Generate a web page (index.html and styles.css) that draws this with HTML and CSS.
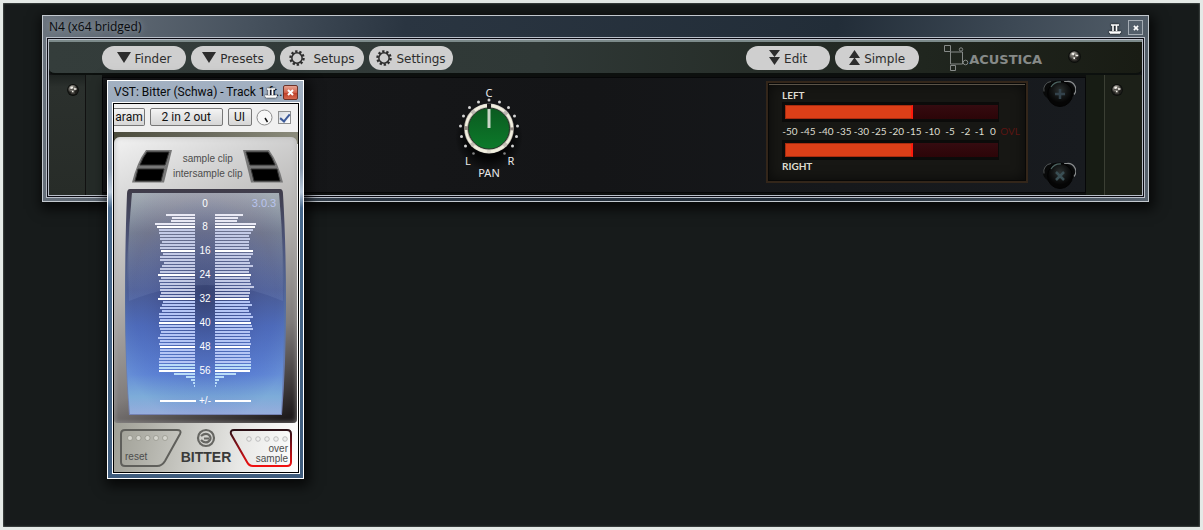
FILE: index.html
```html
<!DOCTYPE html>
<html lang="en">
<head>
<meta charset="utf-8">
<title>N4 (x64 bridged)</title>
<link rel="stylesheet" href="styles.css">
</head>
<body>

<svg class="defs" width="0" height="0" aria-hidden="true">
  <defs>
    <radialGradient id="stud" cx="40%" cy="30%"><stop offset="0" stop-color="#fff"/><stop offset=".35" stop-color="#99968f"/><stop offset="1" stop-color="#201f1c"/></radialGradient>
    <radialGradient id="bolt" cx="50%" cy="35%"><stop offset="0" stop-color="#2c3232"/><stop offset=".6" stop-color="#121414"/><stop offset="1" stop-color="#050505"/></radialGradient>
  </defs>
  <symbol id="rivet" viewBox="0 0 12 12">
    <circle cx="6" cy="6" r="5.900" fill="#0c0e0c"/>
    <circle cx="6" cy="6" r="4.900" fill="url(#stud)"/>
    <path d="M3 5.500h6M6 3v6M4 9h4" stroke="#55524c" fill="none"/>
    <path d="M3.500 3.500h2.500M7 5h2.500M5 7.500h1.500" stroke="#f2efe8" stroke-width="1.400" fill="none"/>
  </symbol>
  <symbol id="pin" viewBox="0 0 12 10">
    <path d="M2 1h8M4 1v6M7.500 1v6M0 8h12M1 9h10" stroke="#fff" stroke-width="1.600" fill="none"/>
  </symbol>
  <symbol id="gear" viewBox="0 0 18 18">
    <circle cx="9" cy="9" r="7.400" fill="none" stroke="#2d2d2d" stroke-width="2.600" stroke-dasharray="2.650 2"/>
    <circle cx="9" cy="9" r="5.800" fill="none" stroke="#2d2d2d" stroke-width="1.700"/>
  </symbol>
  <symbol id="screw" viewBox="0 0 34 30">
    <ellipse cx="17" cy="12" rx="16" ry="10.500" fill="#080909"/>
    <path d="M22 2.500h3a8 8 0 0 1 7 13" fill="none" stroke="#8b8e8f" stroke-width="1.200"/>
    <path d="M9 2.500a8 8 0 0 0-7 10" fill="none" stroke="#4e5253"/>
    <circle cx="18" cy="15" r="12.500" fill="url(#bolt)" stroke="#030303"/>
    <path d="M9 8a11 11 0 0 1 10-5" fill="none" stroke="#4d6462" stroke-width="1.200"/>
  </symbol>
</svg>

<main class="desktop">

  <section class="window host">
    <header class="titlebar">
      <h1>N4 (x64 bridged)</h1>
      <button class="pin" aria-label="Pin"><svg width="12" height="10"><use href="#pin"/></svg></button>
      <button class="close" aria-label="Close"><svg width="6" height="6" viewBox="0 0 7 7"><path d="M1 1l5 5M6 1L1 6" stroke="#fff" stroke-width="1.800"/></svg></button>
    </header>
    <div class="client">
      <div class="n4">
        <nav class="toolbar">
          <button class="pill"><svg width="14" height="11"><path d="M0 0h14L7 11z"/></svg>Finder</button>
          <button class="pill"><svg width="14" height="11"><path d="M0 0h14L7 11z"/></svg>Presets</button>
          <button class="pill wide"><svg width="16" height="16"><use href="#gear"/></svg>Setups</button>
          <button class="pill"><svg width="16" height="16"><use href="#gear"/></svg>Settings</button>
          <span class="fill"></span>
          <button class="pill"><svg width="11" height="15"><path d="M0 0h11L5.500 7zM0 7h11l-5.500 8z"/></svg>Edit</button>
          <button class="pill"><svg width="11" height="15"><path d="M5.500 0L11 8H0zM5.500 7.500L11 15H0z"/></svg>Simple</button>
          <div class="brand">
            <svg width="25" height="26" viewBox="0 0 25 26" fill="none" stroke="#868a88"><path d="M.5.500h6v6h-6zM6 7h12.500v12H6.500V7M6.500 20.500h5v5h-5z"/><circle cx="17" cy="4.500" r="1.700"/><circle cx="21.500" cy="17.500" r="2.300"/></svg>
            <span>ACUSTICA</span>
          </div>
          <svg class="rivet" width="13" height="13"><use href="#rivet"/></svg>
        </nav>
        <div class="rack">
          <div class="ear left"><svg width="12" height="12"><use href="#rivet"/></svg></div>
          <div class="rail"></div>
          <div class="panel">
            <svg class="pan" width="70" height="104" viewBox="0 0 70 104" role="img" aria-label="Pan">
              <defs>
                <linearGradient id="ring" x1="0" y1="0" x2="0" y2="1"><stop offset="0" stop-color="#d8d4cf"/><stop offset=".5" stop-color="#8f8780"/><stop offset="1" stop-color="#e4e1d4"/></linearGradient>
                <linearGradient id="cap" x1="0" y1="0" x2="0" y2="1"><stop offset="0" stop-color="#0b5a20"/><stop offset="1" stop-color="#0c7a2a"/></linearGradient>
                <radialGradient id="drop"><stop offset=".6" stop-color="#000" stop-opacity=".8"/><stop offset="1" stop-color="#000" stop-opacity="0"/></radialGradient>
              </defs>
              <circle cx="35" cy="52" r="34" fill="url(#drop)"/>
              <g fill="#d2d2d2">
                <circle cx="35" cy="15" r="1.500"/><circle cx="24.500" cy="17" r="1.500"/><circle cx="45.500" cy="17" r="1.500"/>
                <circle cx="15.500" cy="22.500" r="1.500"/><circle cx="54.500" cy="22.500" r="1.500"/><circle cx="9.500" cy="31" r="1.500"/><circle cx="60.500" cy="31" r="1.500"/>
                <circle cx="6.500" cy="41" r="1.500"/><circle cx="63.500" cy="41" r="1.500"/><circle cx="7.500" cy="51.500" r="1.500"/><circle cx="62.500" cy="51.500" r="1.500"/>
                <circle cx="11.500" cy="61" r="1.500"/><circle cx="58.500" cy="61" r="1.500"/><circle cx="19.500" cy="68.500" r="1.300" opacity=".6"/><circle cx="50.500" cy="68.500" r="1.300" opacity=".6"/>
              </g>
              <circle cx="35" cy="43.500" r="25" fill="url(#ring)"/>
              <circle cx="35" cy="43.500" r="23" fill="none" stroke="#f1efdf" stroke-width="2.500" stroke-dasharray="14 4.060" stroke-dashoffset="-2"/>
              <circle cx="35" cy="43.500" r="20.500" fill="url(#cap)" stroke="#243527"/>
              <path d="M35 18.500v5" stroke="#1a1a1a" stroke-width="4"/>
              <path d="M35 24v19" stroke="#c9d5c7" stroke-width="3"/>
              <text x="35" y="12">C</text><text x="14" y="80">L</text><text x="57" y="80">R</text><text x="35" y="92">PAN</text>
            </svg>
            <div class="levels">
              <span>LEFT</span>
              <div class="bar"><i></i></div>
              <ol class="scale">
                <li>-50</li><li>-45</li><li>-40</li><li>-35</li><li>-30</li><li>-25</li><li>-20</li><li>-15</li><li>-10</li><li>-5</li><li>-2</li><li>-1</li><li>0</li><li class="ovl">OVL</li>
              </ol>
              <div class="bar"><i></i></div>
              <span>RIGHT</span>
            </div>
            <div class="screws">
              <svg width="34" height="30"><use href="#screw"/><path d="M18 10v10M13 15h10" stroke="#33424b" stroke-width="2.500"/></svg>
              <svg width="34" height="30"><use href="#screw"/><path d="M14 11l8 8M22 11l-8 8" stroke="#3a4f54" stroke-width="2.500"/></svg>
            </div>
          </div>
          <div class="rail"></div>
          <div class="ear right"><svg width="12" height="12"><use href="#rivet"/></svg></div>
        </div>
      </div>
    </div>
  </section>

  <section class="window vst">
    <header class="titlebar">
      <h1>VST: Bitter (Schwa) - Track 1 fr..</h1>
      <button class="pin" aria-label="Pin"><svg width="12" height="10"><use href="#pin"/></svg></button>
      <button class="close" aria-label="Close"><svg width="7" height="7" viewBox="0 0 7 7"><path d="M1 1l5 5M6 1L1 6" stroke="#fff" stroke-width="2"/></svg></button>
    </header>
    <div class="client">
      <div class="controls">
        <button class="param">aram</button>
        <button class="io">2 in 2 out</button>
        <button class="ui">UI</button>
        <svg width="17" height="17" viewBox="0 0 17 17"><circle cx="8.500" cy="8.500" r="7.500" fill="#f8f8f8" stroke="#8d8d8d"/><path d="M9 9l2.500 4" stroke="#111" stroke-width="1.500"/></svg>
        <input type="checkbox" aria-label="Enable plug-in" checked>
      </div>
      <div class="bitter">
        <div class="bezel">
          <div class="clips">
            <svg width="42" height="33" viewBox="0 0 42 33"><path d="M15 0h26L33 32.500H1Q6 12 15 0z" fill="#777"/><path d="M16 2h22l-4 13H9Q12 7 16 2zM7 19h26l-3 12H4z" stroke="#333"/></svg>
            <p>sample clip<br>intersample clip</p>
            <svg width="42" height="33" viewBox="0 0 42 33"><path d="M1 0h26Q36 12 41 32.500H9z" fill="#777"/><path d="M4 2h22q4 5 7 13H8zM9 19h26l3 12H12z" stroke="#333"/></svg>
          </div>
          <svg class="screen" width="163" height="228" viewBox="0 0 163 228" role="img" aria-label="Bit meter">
            <defs>
              <linearGradient id="rim" x1="0" y1="0" x2="0" y2="1"><stop offset="0" stop-color="#3f3c49"/><stop offset=".25" stop-color="#4c557c"/><stop offset=".6" stop-color="#5572ab"/><stop offset="1" stop-color="#7583b4"/></linearGradient>
              <linearGradient id="glass" x1="0" y1="0" x2="0" y2="1"><stop offset="0" stop-color="#a3a2a6"/><stop offset=".18" stop-color="#6a6b7a"/><stop offset=".44" stop-color="#48568a"/><stop offset=".6" stop-color="#4c68b6"/><stop offset=".82" stop-color="#5b80d3"/><stop offset=".92" stop-color="#78a6d6"/><stop offset="1" stop-color="#98a7da"/></linearGradient>
              <radialGradient id="glow" cx="50%" cy="46%" r="60%"><stop offset="0" stop-color="#2c3660" stop-opacity=".65"/><stop offset=".5" stop-color="#41539b" stop-opacity=".3"/><stop offset=".75" stop-color="#5577cf" stop-opacity=".12"/><stop offset="1" stop-color="#8fc4e4" stop-opacity=".2"/></radialGradient>
              <linearGradient id="shine" x1="0" y1="0" x2="0" y2="1"><stop offset="0" stop-color="#c8c6c4" stop-opacity=".12"/><stop offset="1" stop-color="#9fb4e6" stop-opacity=".12"/></linearGradient>
            </defs>
            <path d="M6 1h150q3 0 3 5 3 50 3 110 0 60-4 111H5Q1 176 1 116 1 56 3 6q0-5 3-5z" fill="url(#rim)"/>
            <path d="M8 5h147q5 55 5 111 0 56-3 110H6Q1 172 2 116 3 60 8 5z" fill="url(#glass)"/>
            <path d="M8 5h147q5 55 5 111 0 56-3 110H6Q1 172 2 116 3 60 8 5z" fill="url(#glow)"/>
            <path d="M8 5h147q4 50 4 108-75-32-154 0Q3 60 8 5z" fill="url(#shine)"/>
            <g id="bits"></g>
            <text x="81" y="19">0</text>
            <text x="140" y="19" class="version">3.0.3</text>
            <path d="M36 213h36M91 213h36" stroke="#fff" stroke-width="2"/>
            <text x="81" y="216">+/-</text>
          </svg>
        </div>
        <footer class="actions">
          <button class="reset">
            <svg width="64" height="40" viewBox="0 0 64 40"><path d="M6 2h52q5 0 3 4L46 33q-3 5-8 5H6q-4 0-4-4V6q0-4 4-4z" fill="none" stroke="#5f5f5b" stroke-width="2"/><g fill="#d5d5ce" stroke="#7c7c72" stroke-width=".5"><circle cx="11" cy="10" r="2.500"/><circle cx="19.500" cy="10" r="2.500"/><circle cx="28.500" cy="10" r="2.500"/><circle cx="37" cy="10" r="2.500"/><circle cx="46" cy="10" r="2.500"/></g></svg>
            <span>reset</span>
          </button>
          <div class="mark">
            <svg width="20" height="20" viewBox="0 0 20 20" fill="none" stroke="#666662" stroke-width="2.200"><circle cx="10" cy="10" r="8"/><path d="M5 12q4 4 7.500 1.500t1-6Q10 4 5 8M8 10.500h5"/></svg>
            <strong>BITTER</strong>
          </div>
          <button class="over">
            <svg width="64" height="40" viewBox="0 0 64 40"><defs><linearGradient id="red" x1="0" y1="0" x2="0" y2="1"><stop offset="0" stop-color="#2a1016"/><stop offset=".4" stop-color="#7d1018"/><stop offset="1" stop-color="#f01010"/></linearGradient></defs><path d="M5 2h53q4 0 4 4v28q0 4-4 4H24q-4 0-6-4L2 6q-1-4 3-4z" fill="none" stroke="url(#red)" stroke-width="2"/><g fill="#eee" stroke="#aaa" stroke-width=".7"><circle cx="20" cy="11" r="2.300"/><circle cx="29" cy="11" r="2.300"/><circle cx="38" cy="11" r="2.300"/><circle cx="47" cy="11" r="2.300"/><circle cx="56" cy="11" r="2.300"/></g></svg>
            <span>over<br>sample</span>
          </button>
        </footer>
      </div>
    </div>
  </section>

</main>
<script src="bits.js"></script>
</body>
</html>
```

FILE: styles.css
```css
* { box-sizing: border-box; }

body {
  margin: 0;
  background: #fff;
  font-family: "Open Sans", "Noto Sans", sans-serif;
  font-size: 12px;
}

button {
  margin: 0;
  padding: 0;
  border: 0;
  background: none;
  font: inherit;
  color: inherit;
}
svg { display: block; flex: none; }
h1, p, ol { margin: 0; padding: 0; font-weight: normal; }
.defs { position: absolute; }

.desktop {
  position: relative;
  min-height: 100vh;
  border: 3px solid #e4e9e6;
  background: #171b1b;
  box-shadow: inset 0 0 2px #8c9490;
}

/* windows */
.window {
  position: absolute;
  border: 1px solid #c3c9cf;
  box-shadow: 2px 4px 12px 3px #000b;
}
.host {
  top: 12px;
  left: 39px;
  right: 51px;
  padding: 0 3px 3px;
  background: linear-gradient(100deg, #6b747e 0, #47525e 18%, #2a3541 32%, #222d38 70%, #3c4854 85%, #56616c 100%);
}
.vst {
  top: 77px;
  left: 104px;
  width: 197px;
  padding: 0 3px 4px 4px;
  border-color: #fff;
  background: linear-gradient(#a3b1c2 0, #8798ad 22%, #b9c9da 28%, #46688c 32%, #3f5c7d 100%);
}

.titlebar {
  display: flex;
  align-items: center;
  height: 21px;
}
.titlebar h1 {
  flex: 1;
  min-width: 0;
  overflow: hidden;
  font-size: 12px;
  line-height: 20px;
  white-space: nowrap;
  color: #080a0c;
}
.host h1 { padding-left: 3px; text-shadow: 0 0 6px #8a939c, 0 0 8px #8a939c; }
.vst h1 { padding-left: 2px; font-family: Roboto, sans-serif; }
.pin { filter: drop-shadow(0 0 1px #000); }
.host .pin { padding-top: 4px; }
.vst .pin { margin-left: -20px; padding-top: 3px; }
.close {
  display: grid;
  place-items: center;
  width: 15px;
  height: 15px;
  margin: 2px 2px 0 7px;
  border: 1px solid #a5adb5;
  background: #535f6b;
}
.vst .close {
  margin-left: 6px;
  border-color: #6d3229;
  border-radius: 2px;
  background: linear-gradient(#e6a392, #d1624c 50%, #bb3a24 50%, #d5674e);
}

.host .client {
  padding: 1px;
  border: 1px solid #b9bfc9;
  background: #0a0a12;
}
.vst .client {
  border: 1px solid #000;
  outline: 1px solid #fff;
  margin: 1px;
  background: #fff;
}

/* N4 */
.n4 {
  border: 1px solid #b9bfc9;
  background: #131415;
}
.toolbar {
  display: flex;
  align-items: center;
  gap: 5px;
  height: 35px;
  padding: 0 61px 0 53px;
  border-top: 2px solid #7c8a8a;
  border-bottom: 2px solid #0c100e;
  border-radius: 0 0 6px 6px;
  background: linear-gradient(90deg, #343d3b, #2f3836 45%, #20261f 80%, #191c14);
}
.fill { flex: 1; }
.pill {
  display: flex;
  align-items: center;
  justify-content: center;
  gap: 4px;
  width: 84px;
  height: 24px;
  padding-top: 3px;
  border-radius: 12px;
  background: #cfcfcf;
  font: 12px "DejaVu Sans", sans-serif;
  line-height: 21px;
  color: #2d2d2d;
}
.pill svg { margin-bottom: 3px; }
.pill.wide { gap: 8px; }
.pill path { fill: #2d2d2d; }
.brand {
  display: flex;
  align-items: center;
  margin-left: 20px;
  font: bold 13px "DejaVu Sans", sans-serif;
  color: #868a88;
}
.brand span { padding-top: 3px; }
.toolbar .rivet { margin: 0 0 2px 21px; }

.rack {
  display: flex;
  height: 120px;
  background: #0d0f0e;
}
.ear {
  display: flex;
  width: 37px;
  padding-top: 9px;
  background: linear-gradient(#1d2220, #2b302d 12px, #272c28);
}
.ear.left { padding-left: 18px; border-right: 1px solid #111; }
.ear.right { width: 38px; padding-left: 6px; border-left: 1px solid #3b3f34; background: #1c2018; }
.rail { width: 16px; background: #252b28; }
.panel + .rail { width: 18px; background: #171c14; }
.panel {
  flex: 1;
  display: grid;
  grid-template-columns: 10fr 70px 7fr 262px 57px;
  align-items: start;
  margin: 2px 0;
  border: 1px solid #060708;
  background: linear-gradient(90deg, #17181a, #141517 50%, #181b1f);
}
.pan { grid-column: 2; margin: 7px 0 0 2px; }
.pan text {
  font: 11px "Noto Sans", sans-serif;
  fill: #e9e9e9;
  text-anchor: middle;
}

.levels {
  grid-column: 4;
  height: 102px;
  margin-top: 3px;
  padding: 6px 14px 0;
  border: 2px solid #33261a;
  background: #171714;
  box-shadow: inset 0 0 0 1px #080807, inset 0 2px 0 #5a5348, inset 0 0 14px #000a;
  font: bold 10px Lato, sans-serif;
  line-height: 12px;
  color: #deddd0;
}
.levels span { display: block; height: 13px; }
.bar {
  width: 217px;
  height: 20px;
  padding: 2px 0 2px 2px;
  border: 1px solid #0b0b0a;
  background: linear-gradient(#350b10, #2c0508) content-box, #0c0b0a;
}
.bar i {
  display: block;
  width: 60%;
  height: 14px;
  border: 1px solid #a82c10;
  border-right: 2px solid #ff1a0c;
  background: #dc3f18;
}
.scale {
  display: grid;
  grid-template-columns: repeat(4, 18px) 17px 18px 17px 18px 19px 16px 15px 13px 14px 20px;
  margin: 3px 0 3px -1px;
  line-height: 12px;
  text-align: center;
  list-style: none;
}
.ovl { font-weight: normal; color: #5b1512; }

.screws {
  display: flex;
  flex-direction: column;
  gap: 52px;
  padding: 1px 0 0 14px;
}

/* Bitter */
.controls {
  display: flex;
  align-items: center;
  justify-content: space-between;
  height: 28px;
  padding: 0 7px 2px 0;
  background: #f0f0f0;
  color: #111;
}
.controls button {
  height: 18px;
  border: 1px solid #777;
  border-radius: 2px;
  background: linear-gradient(#f4f4f4, #e4e4e4 50%, #d6d6d6);
  font: 12px Roboto, sans-serif;
  line-height: 16px;
}
.controls .param { width: 31px; border-left: 0; border-radius: 0 2px 2px 0; }
.controls .io { width: 73px; }
.controls .ui { width: 24px; }
.controls input {
  display: grid;
  place-items: center;
  appearance: none;
  width: 13px;
  height: 13px;
  margin: 0;
  border: 1px solid #8e8f8f;
  background: linear-gradient(135deg, #d5dae0, #fff);
}
.controls input:checked::before {
  content: "";
  width: 4px;
  height: 8px;
  border: solid #3c5a9a;
  border-width: 0 2px 2px 0;
  transform: rotate(40deg);
}

.bitter {
  padding-top: 5px;
  background: linear-gradient(90deg, #4b4b3c, #66665a 45%, #8b8b7b) 0 0 / 100% 12px no-repeat,
              linear-gradient(100deg, #86867a 0, #b0b0a8 35%, #e8e8e6 75%, #fff);
  font: 10px "Liberation Sans", sans-serif;
  color: #4c4c4c;
}
.bezel {
  height: 286px;
  margin: 0 1px 0 0;
  border-radius: 6px 6px 4px 4px;
  background: linear-gradient(155deg, #f2f2f2 0, #d4d4d4 20%, #b2b0ae 45%, #7f7b7a 72%, #1f1b1c 97%);
  box-shadow: inset 0 0 4px 1px #aaa8;
}
.clips {
  display: flex;
  align-items: center;
  justify-content: space-between;
  height: 51px;
  padding: 7px 17px 0;
}
.clips p { line-height: 15px; text-align: center; white-space: nowrap; }
.screen { margin-left: 10px; }
.screen text {
  font: 10px "Liberation Sans", sans-serif;
  fill: #fff;
  text-anchor: middle;
}
.screen .version { font-size: 11px; fill: #b9c4ee; }

.actions {
  display: flex;
  align-items: flex-start;
  justify-content: space-between;
  height: 49px;
  padding: 5px 5px 0;
}
.actions button { display: grid; }
.actions button > * { grid-area: 1 / 1; }
.actions span { align-self: end; line-height: 10px; }
.reset span { padding: 0 0 6px 6px; text-align: left; }
.over span { padding: 0 5px 4px 0; text-align: right; }
.mark {
  display: flex;
  flex-direction: column;
  align-items: center;
  width: 44px;
}
.mark strong {
  font-size: 14px;
  line-height: 18px;
  color: #3a3a3a;
}
```

FILE: bits.js
```js
// bar lengths from the top bit down, left and right channel
var left = [29,23,24,40,38,36,36,35,35,33,35,35,34,32,35,35,31,33,35,35,37,34,36,35,35,35,34,35,37,
            32,33,35,33,36,36,35,36,36,35,34,35,37,35,36,35,35,35,35,36,36,36,36,36,21,9,4,2,1];
var right = [28,23,22,41,40,38,36,34,35,34,34,34,38,38,36,34,35,38,34,34,36,35,35,36,39,35,35,34,34,
             35,37,33,34,36,38,35,36,37,38,35,35,36,35,36,35,35,35,35,36,36,36,36,35,21,9,4,2,1];

var svg = '';
for (var i = 0; i < left.length; i++) {
  var y = 27 + i * 3;
  var major = i % 8 == 4;
  var color = major ? '#fff' : i < 4 ? '#e9e9f4' : i < 28 ? '#c3cae6' : i < 50 ? '#b4c5f5' : '#b9dcf8';
  svg += '<path d="M' + (71 - left[i]) + ' ' + y + 'H71M91 ' + y + 'h' + right[i] +
         '" stroke="' + color + '" stroke-width="2"/>';
  if (major) {
    svg += '<text x="81" y="' + (y + 3) + '">' + (i + 4) + '</text>';
  }
}
document.getElementById('bits').innerHTML = svg;
```
